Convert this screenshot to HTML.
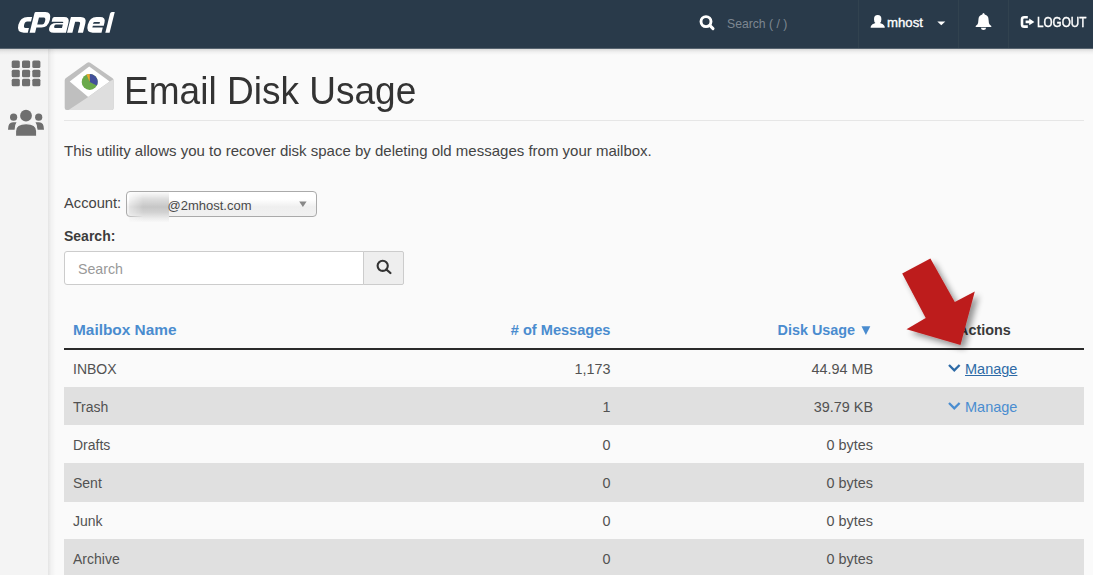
<!DOCTYPE html>
<html><head><meta charset="utf-8">
<style>
*{margin:0;padding:0;box-sizing:border-box}
html,body{width:1093px;height:575px;overflow:hidden;background:#fafafa;font-family:"Liberation Sans",sans-serif;color:#333}
.abs{position:absolute;white-space:nowrap}
#hdr{position:absolute;left:0;top:0;width:1093px;height:48px;background:#293a4a;border-bottom:1px solid #56636f}
#hdr{height:49px}
#hdrsh{position:absolute;left:0;top:49px;width:1093px;height:6px;background:linear-gradient(rgba(0,0,0,0.13),rgba(0,0,0,0.04) 50%,rgba(0,0,0,0))}
.sep{position:absolute;top:0;width:1px;height:48px;background:#31424f}
#side{position:absolute;left:0;top:49px;width:48px;height:527px;background:#f4f4f4}
#sidesh{position:absolute;left:48px;top:49px;width:8px;height:527px;background:linear-gradient(90deg,rgba(0,0,0,0.09),rgba(0,0,0,0.03) 40%,rgba(0,0,0,0))}
.t14{font-size:14px;line-height:16px;color:#525252}
.row{position:absolute;left:64px;width:1020px;height:38px}
.grey{background:#e0e0e0}
.th{color:#4a8ccf;font-weight:bold;font-size:14px;line-height:16px}
.mng{color:#428bca}
</style></head><body>
<div id="hdr"></div>
<!-- logo -->
<svg class="abs" style="left:0;top:0" width="130" height="48" viewBox="0 0 130 48">
 <g fill="#fff" fill-rule="evenodd" transform="translate(0,32.7) skewX(-14) translate(0,-32.7)">
  <path d="M28.2,17 H23.8 Q16.4,17 16.4,24.85 Q16.4,32.7 23.8,32.7 H27.8 V28.1 H24.4 Q22.2,28.1 22.2,24.85 Q22.2,21.6 24.4,21.6 H28.2 Z"/>
  <path d="M29.6,32.7 V13.2 Q29.6,12 30.8,12 H40.2 Q46.7,12 46.7,19.8 Q46.7,27.6 40.2,27.6 H35.1 V32.7 Z M35.2,17.6 V24.6 H40 Q42.2,24.6 42.2,21.1 Q42.2,17.6 40,17.6 Z"/>
  <path d="M50.5,17 H60.2 Q66,17 66,22.8 V32.7 H53.8 Q48,32.7 48,27.9 Q48,23 53.8,23 H60.8 Q60.8,21.8 59.6,21.8 H48.9 V18.6 Q48.9,17 50.5,17 Z M53.8,24.5 H60.8 V28.1 H53.8 Q52.6,28.1 52.6,26.3 Q52.6,24.5 53.8,24.5 Z"/>
  <path d="M67,32.7 V17 H76.8 Q83,17 83,23.2 V32.7 H77.8 V23.9 Q77.8,21.7 75.6,21.7 H72.4 V32.7 Z"/>
  <path d="M92.6,17 H96.2 Q102,17 102,22.6 V25.8 H91.1 V27.6 H101.5 V32.7 H92.6 Q85.8,32.7 85.8,24.85 Q85.8,17 92.6,17 Z M91.8,22.1 H97.3 V23.7 H90.6 Q90.6,22.1 91.8,22.1 Z"/>
  <path d="M105.3,32.7 V13.5 Q105.3,12 106.8,12 H109.6 V32.7 Z"/>
 </g>
</svg>
<!-- search in header -->
<svg class="abs" style="left:698px;top:14px" width="20" height="20" viewBox="0 0 20 20">
 <circle cx="8" cy="7.6" r="5" fill="none" stroke="#fff" stroke-width="2.9"/>
 <line x1="11.8" y1="11.4" x2="15" y2="14.6" stroke="#fff" stroke-width="3" stroke-linecap="round"/>
</svg>
<div class="abs" style="left:727px;top:15.5px;font-size:12.2px;line-height:16px;color:#7d8791">Search ( / )</div>
<div class="sep" style="left:858px"></div>
<div class="sep" style="left:958px"></div>
<div class="sep" style="left:1008px"></div>
<!-- user icon -->
<svg class="abs" style="left:870px;top:15px" width="16" height="14" viewBox="0 0 16 14">
 <path d="M7.7,0.1 Q11.4,0.1 11.4,4.3 Q11.4,7.2 10,8.1 Q13.6,8.9 14.5,11 L14.8,12.8 H0.6 L0.9,11 Q1.8,8.9 5.4,8.1 Q4,7.2 4,4.3 Q4,0.1 7.7,0.1 Z" fill="#fff"/>
</svg>
<div class="abs" style="left:887px;top:15px;font-size:13.2px;line-height:16px;color:#fff;-webkit-text-stroke:0.35px #fff;letter-spacing:0px">mhost</div>
<svg class="abs" style="left:937px;top:21px" width="9" height="5" viewBox="0 0 9 5"><path d="M0.3,0.6 H8.3 L4.3,4.3 Z" fill="#fff"/></svg>
<!-- bell -->
<svg class="abs" style="left:975px;top:12px" width="17" height="19" viewBox="0 0 17 19">
 <path d="M8.5,1.1 Q9.5,1.1 9.7,2.6 Q13.5,3.4 13.6,8 Q13.7,11.6 14.6,12.6 Q15.5,13.6 16.3,14 V14.9 H0.7 V14 Q1.5,13.6 2.4,12.6 Q3.3,11.6 3.4,8 Q3.5,3.4 7.3,2.6 Q7.5,1.1 8.5,1.1 Z" fill="#fff"/>
 <path d="M5.8,15.8 H11.2 Q10.8,18 8.5,18 Q6.2,18 5.8,15.8 Z" fill="#fff"/>
</svg>
<!-- logout icon -->
<svg class="abs" style="left:1020px;top:15px" width="16" height="14" viewBox="0 0 16 14">
 <path d="M7.8,2.2 H4.2 Q2,2.2 2,4.4 V9.4 Q2,11.6 4.2,11.6 H7.8" fill="none" stroke="#fff" stroke-width="2.6"/>
 <path d="M5.6,5.5 H9.2 V3.6 L14.4,6.9 L9.2,10.2 V8.3 H5.6 Z" fill="#fff"/>
</svg>
<div class="abs" style="left:1037px;top:13.5px;font-size:14.5px;line-height:16px;color:#fff;-webkit-text-stroke:0.45px #fff;transform-origin:0 0;transform:scaleX(0.805)">LOGOUT</div>

<!-- sidebar -->
<div id="side"></div>
<div id="sidesh"></div>
<div id="hdrsh"></div>
<svg class="abs" style="left:11px;top:60px" width="31" height="28" viewBox="0 0 31 28" fill="#6f6f6f">
 <rect x="0.7" y="0.6" width="8.1" height="7.4" rx="1.5"/><rect x="11" y="0.6" width="8.1" height="7.4" rx="1.5"/><rect x="21.3" y="0.6" width="8.1" height="7.4" rx="1.5"/>
 <rect x="0.7" y="9.8" width="8.1" height="7.4" rx="1.5"/><rect x="11" y="9.8" width="8.1" height="7.4" rx="1.5"/><rect x="21.3" y="9.8" width="8.1" height="7.4" rx="1.5"/>
 <rect x="0.7" y="18.8" width="8.1" height="7.4" rx="1.5"/><rect x="11" y="18.8" width="8.1" height="7.4" rx="1.5"/><rect x="21.3" y="18.8" width="8.1" height="7.4" rx="1.5"/>
</svg>
<svg class="abs" style="left:6px;top:108px" width="40" height="30" viewBox="0 0 40 30" fill="#6f6f6f">
 <circle cx="20" cy="7.7" r="5.9"/>
 <circle cx="7.6" cy="9.2" r="3.6"/>
 <circle cx="32.7" cy="9.2" r="3.6"/>
  <path d="M2,21.7 Q2,14.3 7,14.3 H10.5 Q8.6,16.8 8.6,21.7 Z"/>
 <path d="M38,21.7 Q38,14.3 33,14.3 H29.5 Q31.4,16.8 31.4,21.7 Z"/>
 <path d="M9.4,27.7 V23.2 Q9.4,15.6 20.1,15.6 Q30.8,15.6 30.8,23.2 V27.7 Q30.8,28.4 30,28.4 H10.2 Q9.4,28.4 9.4,27.7 Z" stroke="#f4f4f4" stroke-width="1.4"/>
</svg>

<!-- title icon -->
<svg class="abs" style="left:64px;top:61px" width="51" height="51" viewBox="0 0 51 51">
 <path d="M0.7,19.5 Q0.7,17.9 2,17 L23.2,1.8 Q24.7,0.8 26.2,1.8 L48.3,17 Q49.6,17.9 49.6,19.5 V47 Q49.6,49 47.6,49 H2.7 Q0.7,49 0.7,47 Z" fill="#bfbfbf"/>
 <path d="M5.7,20.4 L25.2,5.6 L45.7,20.4 L24.2,36 Z" fill="#fff"/>
 <path d="M49.6,18.2 V47 Q49.6,49 47.6,49 H4.5 L24.2,36 L45.7,20.4 Z" fill="#dedede"/>
 <circle cx="25.7" cy="20.9" r="8" fill="#6aaa4b"/>
 <path d="M25.7,20.9 V12.9 A8,8 0 0 1 32.85,24.5 Z" fill="#43509b"/>
 <path d="M25.7,20.9 L22.45,13.6 A8,8 0 0 1 25.7,12.9 Z" fill="#f2a62b"/>
</svg>
<div class="abs" style="left:123.5px;top:70px;font-size:38.5px;line-height:42px;color:#333;transform-origin:0 0;transform:scaleX(0.962)">Email Disk Usage</div>
<div class="abs" style="left:64px;top:120px;width:1020px;height:1px;background:#e6e6e6"></div>

<div class="abs" style="left:64px;top:142px;font-size:15px;line-height:17px;color:#444">This utility allows you to recover disk space by deleting old messages from your mailbox.</div>

<div class="abs" style="left:64px;top:194.5px;font-size:14.7px;line-height:17px;color:#444">Account:</div>
<div class="abs" style="left:126px;top:191px;width:191px;height:26px;border:1px solid #aaa;border-radius:4px;background:linear-gradient(#fff 0%,#fff 30%,#efefef 62%,#f1f1f1 100%)"></div>
<div class="abs" style="left:129px;top:192px;width:40px;height:30px;background:linear-gradient(180deg,rgba(238,238,238,0.2) 0%,#dcdcdc 25%,#c6c6c6 50%,#d2d2d2 68%,#ececec 88%,rgba(245,245,245,0.3) 100%);-webkit-mask-image:linear-gradient(90deg,rgba(0,0,0,0.3) 0%,#000 35%,#000 100%)"></div>
<div class="abs" style="left:167.5px;top:197.5px;font-size:13px;line-height:16px;color:#4a4a4a">@2mhost.com</div>
<svg class="abs" style="left:299px;top:200.5px" width="8" height="7" viewBox="0 0 8 7"><path d="M0.2,0.6 H7.6 L3.9,5.9 Z" fill="#888"/></svg>

<div class="abs" style="left:64px;top:228px;font-size:14px;line-height:17px;font-weight:bold;color:#3c3c3c">Search:</div>
<div class="abs" style="left:64px;top:251px;width:300px;height:34px;border:1px solid #ccc;border-radius:3px 0 0 3px;background:#fff"></div>
<div class="abs" style="left:78px;top:261px;font-size:14.2px;line-height:17px;color:#999">Search</div>
<div class="abs" style="left:363px;top:251px;width:41px;height:34px;border:1px solid #ccc;border-radius:0 2px 2px 0;background:#eee"></div>
<svg class="abs" style="left:375px;top:259px" width="18" height="17" viewBox="0 0 18 17">
 <circle cx="7.7" cy="6.8" r="5.1" fill="none" stroke="#333" stroke-width="2.1"/>
 <line x1="11.4" y1="10.5" x2="15.4" y2="14" stroke="#333" stroke-width="2.3" stroke-linecap="round"/>
</svg>

<!-- table -->
<div class="abs th" style="left:73px;top:322px;font-size:15.4px">Mailbox Name</div>
<div class="abs th" style="right:482.5px;top:322px;font-size:14.6px">#&nbsp;of Messages</div>
<div class="abs th" style="left:777.5px;top:322px;font-size:14.4px">Disk Usage</div>
<svg class="abs" style="left:861px;top:324.5px" width="10" height="11" viewBox="0 0 10 11"><path d="M0.5,1.2 H9.3 L4.9,10 Z" fill="#4a8ccf"/></svg>
<div class="abs th" style="left:958px;top:322px;color:#3a3a3a;font-size:14.4px">Actions</div>
<div class="abs" style="left:64px;top:348px;width:1020px;height:2px;background:#2a2a2a"></div>

<div class="row" style="top:350px"></div>
<div class="row grey" style="top:387px"></div>
<div class="row" style="top:425px"></div>
<div class="row grey" style="top:463px;height:39px"></div>
<div class="row" style="top:502px"></div>
<div class="row grey" style="top:539px"></div>

<div class="abs t14" style="left:73px;top:360.5px">INBOX</div>
<div class="abs t14" style="left:73px;top:398.5px">Trash</div>
<div class="abs t14" style="left:73px;top:436.5px">Drafts</div>
<div class="abs t14" style="left:73px;top:474.5px">Sent</div>
<div class="abs t14" style="left:73px;top:512.5px">Junk</div>
<div class="abs t14" style="left:73px;top:550.5px">Archive</div>

<div class="abs t14" style="font-size:14.4px;right:482.5px;top:360.5px">1,173</div>
<div class="abs t14" style="font-size:14.4px;right:482.5px;top:398.5px">1</div>
<div class="abs t14" style="font-size:14.4px;right:482.5px;top:436.5px">0</div>
<div class="abs t14" style="font-size:14.4px;right:482.5px;top:474.5px">0</div>
<div class="abs t14" style="font-size:14.4px;right:482.5px;top:512.5px">0</div>
<div class="abs t14" style="font-size:14.4px;right:482.5px;top:550.5px">0</div>

<div class="abs t14" style="font-size:14.4px;right:220px;top:360.5px">44.94 MB</div>
<div class="abs t14" style="font-size:14.4px;right:220px;top:398.5px">39.79 KB</div>
<div class="abs t14" style="font-size:14.4px;right:220px;top:436.5px">0 bytes</div>
<div class="abs t14" style="font-size:14.4px;right:220px;top:474.5px">0 bytes</div>
<div class="abs t14" style="font-size:14.4px;right:220px;top:512.5px">0 bytes</div>
<div class="abs t14" style="font-size:14.4px;right:220px;top:550.5px">0 bytes</div>

<svg class="abs" style="left:947px;top:362px" width="15" height="12" viewBox="0 0 15 12"><path d="M2,3 L7.3,8.3 L12.6,3" fill="none" stroke="#2d6aa6" stroke-width="2.3"/></svg>
<div class="abs t14" style="left:965px;top:361px;font-size:14.5px;color:#2d6aa6;text-decoration:underline">Manage</div>
<svg class="abs" style="left:947px;top:400px" width="15" height="12" viewBox="0 0 15 12"><path d="M2,3 L7.3,8.3 L12.6,3" fill="none" stroke="#4a8dd0" stroke-width="2.3"/></svg>
<div class="abs t14" style="left:965px;top:399px;font-size:14.5px;color:#4a8dd0">Manage</div>

<!-- red arrow -->
<svg class="abs" style="left:880px;top:245px" width="120" height="115" viewBox="880 245 120 115">
 <defs><filter id="sh" x="-30%" y="-30%" width="160%" height="160%"><feGaussianBlur in="SourceAlpha" stdDeviation="3.2"/><feOffset dx="4" dy="4"/><feComponentTransfer><feFuncA type="linear" slope="0.42"/></feComponentTransfer><feMerge><feMergeNode/><feMergeNode in="SourceGraphic"/></feMerge></filter></defs>
 <path d="M902.2,273.5 L930.4,258.4 L954.8,301.9 L974.8,291.4 L960.5,344.9 L906.5,329.2 L925.7,317.9 Z" fill="#bd1e1e" filter="url(#sh)"/>
</svg>
</body></html>
